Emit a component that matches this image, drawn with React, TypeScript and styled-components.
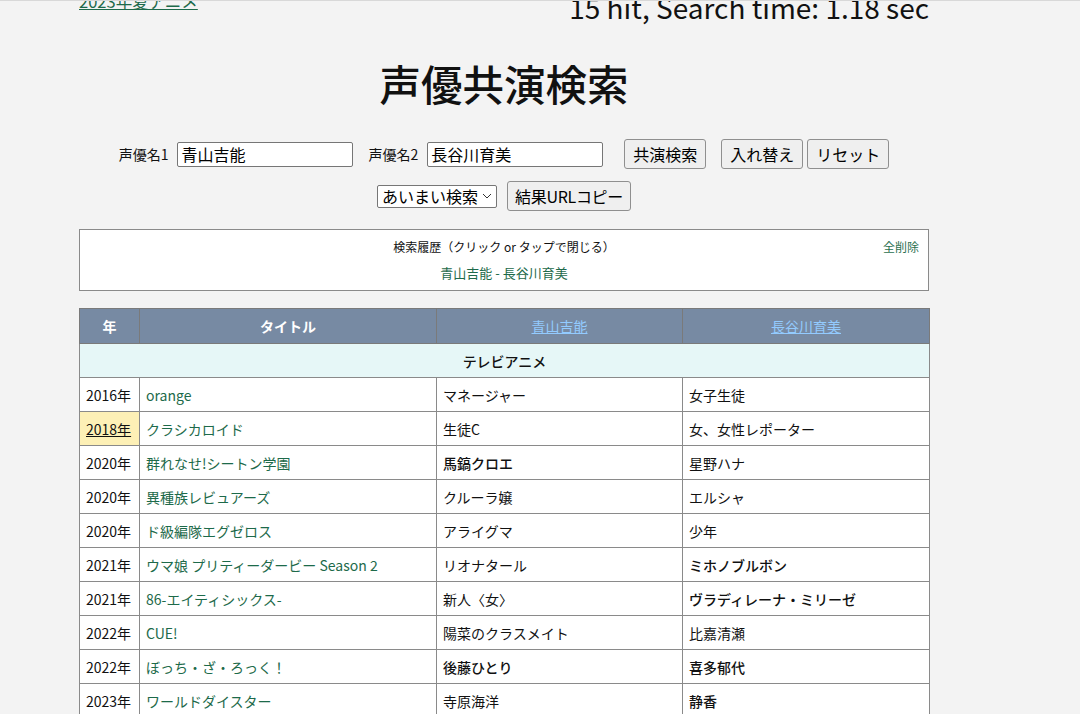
import React from "react";
import styled, { createGlobalStyle } from "styled-components";

const GlobalStyle = createGlobalStyle`
  html, body {
    margin: 0;
    padding: 0;
    background: #f3f3f3;
    overflow: hidden;
  }
  body {
    font-family: "Noto Sans CJK JP", "Noto Sans", sans-serif;
    color: #111;
    border-top: 1px solid #d8d8d8;
  }
`;

type Row = {
  year: string;
  title: string;
  role1: string;
  role2: string;
  main1?: boolean;
  main2?: boolean;
  mark?: boolean;
};

const rows: Row[] = [
  { year: "2016年", title: "orange", role1: "マネージャー", role2: "女子生徒" },
  { year: "2018年", title: "クラシカロイド", role1: "生徒C", role2: "女、女性レポーター", mark: true },
  { year: "2020年", title: "群れなせ!シートン学園", role1: "馬鎬クロエ", role2: "星野ハナ", main1: true },
  { year: "2020年", title: "異種族レビュアーズ", role1: "クルーラ嬢", role2: "エルシャ" },
  { year: "2020年", title: "ド級編隊エグゼロス", role1: "アライグマ", role2: "少年" },
  { year: "2021年", title: "ウマ娘 プリティーダービー Season 2", role1: "リオナタール", role2: "ミホノブルボン", main2: true },
  { year: "2021年", title: "86-エイティシックス-", role1: "新人〈女〉", role2: "ヴラディレーナ・ミリーゼ", main2: true },
  { year: "2022年", title: "CUE!", role1: "陽菜のクラスメイト", role2: "比嘉清瀬" },
  { year: "2022年", title: "ぼっち・ざ・ろっく！", role1: "後藤ひとり", role2: "喜多郁代", main1: true, main2: true },
  { year: "2023年", title: "ワールドダイスター", role1: "寺原海洋", role2: "静香", main2: true },
];

const Page = styled.div`
  width: 850px;
  margin: -12px 0 0 79px;
`;

const TopBar = styled.div`
  display: flex;
  justify-content: space-between;
  align-items: flex-start;
`;

const SeasonLink = styled.a`
  font-size: 16.5px;
  line-height: 24px;
  color: #1d6a4a;
  text-decoration: underline;
`;

const HitInfo = styled.div`
  font-size: 28px;
  line-height: 40px;
  margin-top: -2px;
  margin-bottom: 3px;
  color: #111;
`;

const Title = styled.h1`
  margin: 25px 0 0;
  text-align: center;
  font-size: 41.5px;
  font-weight: 500;
  line-height: 56px;
`;

const FormRow = styled.div<{ $top: number }>`
  display: flex;
  justify-content: center;
  align-items: center;
  margin-top: ${(p) => p.$top}px;
`;

const Label = styled.label`
  font-size: 14px;
  margin-right: 9px;
`;

const NameInput = styled.input<{ $gap: number }>`
  box-sizing: border-box;
  width: 176px;
  height: 25px;
  padding: 0 3px;
  border: 1px solid #767676;
  border-radius: 2px;
  background: #fff;
  font: inherit;
  font-size: 16px;
  color: #000;
  margin-right: ${(p) => p.$gap}px;
`;

const Button = styled.button<{ $gap?: number }>`
  box-sizing: border-box;
  height: 30px;
  padding: 0 8px;
  border: 1px solid #8f8f8f;
  border-radius: 3px;
  background: #efefef;
  font: inherit;
  font-size: 16px;
  color: #000;
  margin-left: ${(p) => p.$gap ?? 0}px;
`;

const CopyButton = styled(Button)`
  padding: 0 7px;
  letter-spacing: -0.3px;
`;

const SelectWrap = styled.div`
  position: relative;
  margin-right: 10px;
  display: flex;
`;

const Select = styled.select`
  box-sizing: border-box;
  width: 120px;
  height: 23px;
  padding: 0 0 0 4px;
  border: 1px solid #767676;
  border-radius: 2px;
  background: #fff;
  font: inherit;
  font-size: 16px;
  line-height: 20px;
  color: #000;
  appearance: none;
  -webkit-appearance: none;
`;

const Chevron = styled.svg`
  position: absolute;
  right: 5px;
  top: 8px;
  pointer-events: none;
`;

const HistoryBox = styled.div`
  margin-top: 18px;
  box-sizing: border-box;
  height: 62px;
  border: 1px solid #8a8a8a;
  background: #fff;
  padding-top: 7px;
  text-align: center;
  position: relative;
  font-size: 12px;
`;

const HistoryHead = styled.div`
  line-height: 20px;
  color: #111;
`;

const ClearAll = styled.a`
  position: absolute;
  right: 9px;
  top: 7px;
  line-height: 20px;
  font-size: 12px;
  color: #2b7050;
`;

const HistoryItem = styled.a`
  display: inline-block;
  margin-top: 6px;
  font-size: 13px;
  line-height: 20px;
  color: #1d6a4a;
`;

const Table = styled.table`
  margin-top: 17px;
  width: 850px;
  border-collapse: collapse;
  table-layout: fixed;
  font-size: 14px;
  background: #fff;
`;

const HeadCell = styled.th`
  height: 34px;
  padding: 0;
  background: #778aa3;
  color: #fff;
  font-weight: 700;
  text-align: center;
  border: 1px solid #7a7a7a;
  a {
    color: #93cbff;
    font-weight: 400;
    text-decoration: underline;
  }
`;

const SectionCell = styled.td`
  height: 33px;
  padding: 0;
  background: #e6f7f7;
  text-align: center;
  font-weight: 500;
  border: 1px solid #8a8a8a;
`;

const Cell = styled.td<{ $mark?: boolean; $main?: boolean }>`
  height: 33px;
  padding: 0 6px;
  border: 1px solid #8a8a8a;
  white-space: nowrap;
  background: ${(p) => (p.$mark ? "#fdf0b6" : "#fff")};
  font-weight: ${(p) => (p.$main ? 500 : 400)};
  color: #111;
`;

const YearLink = styled.a`
  color: #111;
  text-decoration: underline;
`;

const TitleLink = styled.a`
  color: #1d6a4a;
  text-decoration: none;
`;

export default function App() {
  return (
    <>
      <GlobalStyle />
      <Page>
        <TopBar>
          <SeasonLink href="#">2023年夏アニメ</SeasonLink>
          <HitInfo>15 hit, Search time: 1.18 sec</HitInfo>
        </TopBar>
        <Title>声優共演検索</Title>
        <FormRow $top={28}>
          <Label>声優名1</Label>
          <NameInput $gap={15} defaultValue="青山吉能" />
          <Label>声優名2</Label>
          <NameInput $gap={0} defaultValue="長谷川育美" />
          <Button $gap={21}>共演検索</Button>
          <Button $gap={15}>入れ替え</Button>
          <Button $gap={4}>リセット</Button>
        </FormRow>
        <FormRow $top={12}>
          <SelectWrap>
            <Select defaultValue="fuzzy">
              <option value="fuzzy">あいまい検索</option>
              <option value="exact">完全一致</option>
            </Select>
            <Chevron width="10" height="6" viewBox="0 0 10 6">
              <path d="M1 1l4 4 4-4" fill="none" stroke="#333" strokeWidth="1" />
            </Chevron>
          </SelectWrap>
          <CopyButton>結果URLコピー</CopyButton>
        </FormRow>
        <HistoryBox>
          <HistoryHead>検索履歴（クリック or タップで閉じる）</HistoryHead>
          <ClearAll>全削除</ClearAll>
          <HistoryItem>青山吉能 - 長谷川育美</HistoryItem>
        </HistoryBox>
        <Table>
          <colgroup>
            <col style={{ width: 60 }} />
            <col style={{ width: 297 }} />
            <col style={{ width: 246 }} />
            <col style={{ width: 247 }} />
          </colgroup>
          <thead>
            <tr>
              <HeadCell>年</HeadCell>
              <HeadCell>タイトル</HeadCell>
              <HeadCell>
                <a href="#">青山吉能</a>
              </HeadCell>
              <HeadCell>
                <a href="#">長谷川育美</a>
              </HeadCell>
            </tr>
          </thead>
          <tbody>
            <tr>
              <SectionCell colSpan={4}>テレビアニメ</SectionCell>
            </tr>
            {rows.map((r, i) => (
              <tr key={i}>
                <Cell $mark={r.mark}>
                  {r.mark ? <YearLink href="#">{r.year}</YearLink> : r.year}
                </Cell>
                <Cell>
                  <TitleLink href="#">{r.title}</TitleLink>
                </Cell>
                <Cell $main={r.main1}>{r.role1}</Cell>
                <Cell $main={r.main2}>{r.role2}</Cell>
              </tr>
            ))}
          </tbody>
        </Table>
      </Page>
    </>
  );
}
